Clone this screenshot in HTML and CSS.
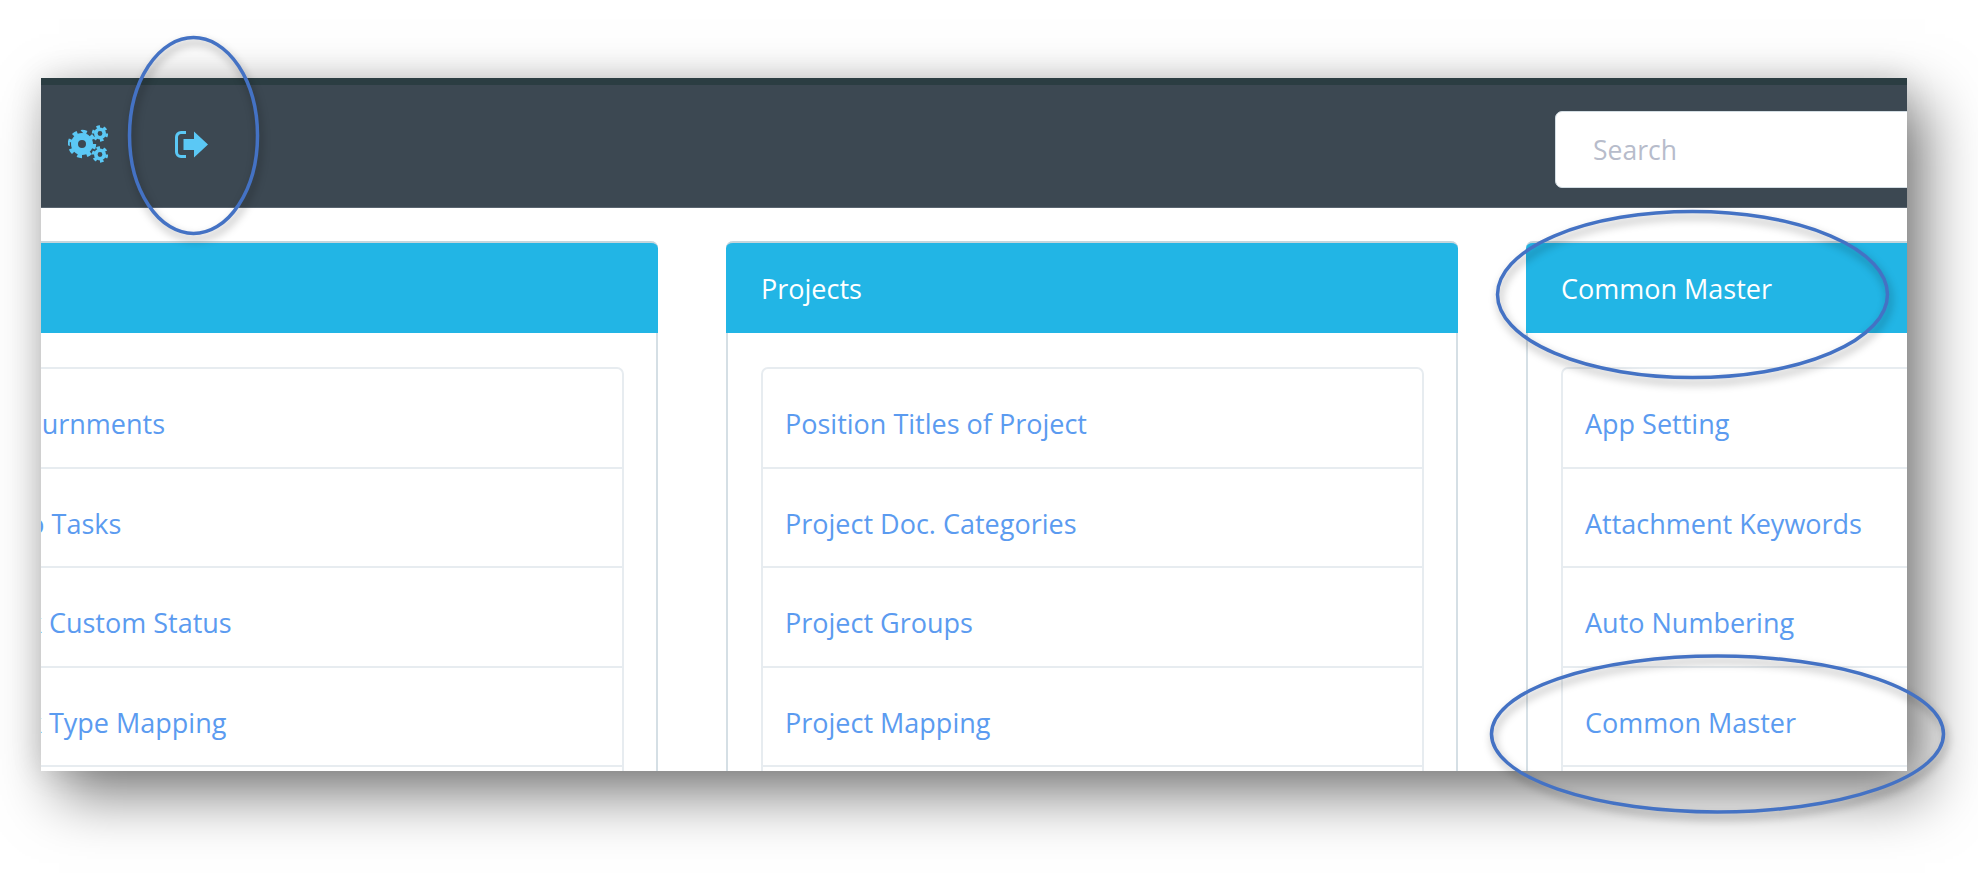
FILE: index.html
```html
<!DOCTYPE html>
<html lang="en">
<head>
<meta charset="utf-8">
<title>Settings</title>
<link rel="stylesheet" href="styles.css">
</head>
<body>
<div class="stage">
  <div class="window">
    <header class="topbar">
      <svg class="icon-cogs" viewBox="0 0 40 38" width="40" height="38" aria-hidden="true">
        <circle class="gear-ring" cx="14" cy="19" r="7.500" stroke-width="7"/>
        <circle class="gear-teeth" cx="14" cy="19" r="12.2" stroke-width="4" pathLength="80" stroke-dasharray="5 5"/>
        <circle class="gear-ring" cx="32" cy="8.500" r="4.200" stroke-width="3.600"/>
        <circle class="gear-teeth" cx="32" cy="8.500" r="6.800" stroke-width="2.800" pathLength="48" stroke-dasharray="4 4"/>
        <circle class="gear-ring" cx="32" cy="29.500" r="4.200" stroke-width="3.600"/>
        <circle class="gear-teeth" cx="32" cy="29.500" r="6.800" stroke-width="2.800" pathLength="48" stroke-dasharray="4 4"/>
      </svg>
      <svg class="icon-signout" viewBox="0 0 33 27" width="33" height="27" aria-hidden="true">
        <path class="door" d="M11 1.500H6A4.500 4.500 0 0 0 1.500 6v15A4.500 4.500 0 0 0 6 25.500h5"/>
        <path class="arrow" d="M19 0.500 33 13.500 19 26.500V19H8.500V8H19z"/>
      </svg>
      <div class="search"><span class="search-text">Search</span></div>
    </header>
    <main class="panels">
      <section class="panel">
        <h2 class="panel-head">Tasks</h2>
        <div class="panel-body">
          <ul class="list">
            <li class="row"><a class="link">Adjournments</a></li>
            <li class="row"><a class="link">Auto Tasks</a></li>
            <li class="row"><a class="link">Task Custom Status</a></li>
            <li class="row"><a class="link">Task Type Mapping</a></li>
            <li class="row"><a class="link">Priorities</a></li>
          </ul>
        </div>
      </section>
      <section class="panel">
        <h2 class="panel-head">Projects</h2>
        <div class="panel-body">
          <ul class="list">
            <li class="row"><a class="link">Position Titles of Project</a></li>
            <li class="row"><a class="link">Project Doc. Categories</a></li>
            <li class="row"><a class="link">Project Groups</a></li>
            <li class="row"><a class="link">Project Mapping</a></li>
            <li class="row"><a class="link">Project Types</a></li>
          </ul>
        </div>
      </section>
      <section class="panel">
        <h2 class="panel-head">Common Master</h2>
        <div class="panel-body">
          <ul class="list">
            <li class="row"><a class="link">App Setting</a></li>
            <li class="row"><a class="link">Attachment Keywords</a></li>
            <li class="row"><a class="link">Auto Numbering</a></li>
            <li class="row"><a class="link">Common Master</a></li>
            <li class="row"><a class="link">Countries</a></li>
          </ul>
        </div>
      </section>
    </main>
  </div>
  <svg class="callout callout-a" viewBox="0 0 137 205" aria-hidden="true"><ellipse cx="68.500" cy="102.500" rx="64" ry="98"/></svg>
  <svg class="callout callout-b" viewBox="0 0 399 175" aria-hidden="true"><ellipse cx="199.500" cy="87.500" rx="195" ry="83"/></svg>
  <svg class="callout callout-c" viewBox="0 0 461 164" aria-hidden="true"><ellipse cx="230.500" cy="82" rx="226" ry="78"/></svg>
</div>
</body>
</html>
```

FILE: styles.css
```css
* { box-sizing: border-box; }
html, body { margin: 0; padding: 0; background: #fff; }
body { font-family: "Open Sans", "Noto Sans", sans-serif; overflow: hidden; }

.stage { position: relative; width: 1978px; height: 873px; padding: 78px 0 0 41px; }

.window {
  width: 1866px;
  height: 693px;
  overflow: hidden;
  background: #fff;
  box-shadow: 18px 24px 56px rgba(0, 0, 0, .5), 0 0 30px rgba(0, 0, 0, .12);
}

.topbar {
  display: flex;
  align-items: center;
  height: 130px;
  padding: 0 0 0 27px;
  background: #3c4852;
  border-top: 7px solid #2b3d42;
  border-bottom: 1px solid #5a6570;
}
.icon-cogs { fill: none; margin-bottom: 4px; }
.gear-ring, .gear-teeth { fill: none; stroke: #5bc8f5; }
.icon-signout { margin: 0 0 4px 67px; }
.door { fill: none; stroke: #5bc8f5; stroke-width: 3; }
.arrow { fill: #5bc8f5; }

.search {
  display: flex;
  align-items: center;
  flex: none;
  width: 500px;
  height: 77px;
  margin: 7px -148px 0 auto;
  padding-left: 37px;
  background: #fff;
  border-radius: 7px;
  border: 1px solid #d3dde3;
}
.search-text { font-size: 26.500px; color: #b7bccb; }

.panels { display: flex; gap: 68px; margin: 33px 0 0 -115px; }

.panel {
  flex: none;
  width: 732px;
  background: #fff;
  border: 2px solid #d5dfe5;
  border-top-width: 0;
  border-radius: 7px 7px 0 0;
}
.panel-head {
  height: 92px;
  margin: 0 -2px;
  padding: 0 0 0 35px;
  display: flex;
  align-items: center;
  font-size: 27px;
  font-weight: 400;
  color: #fff;
  background: #22b5e5;
  border-top: 2px solid #c5d5dc;
  border-radius: 7px 7px 0 0;
}
.panel-body { padding: 34px 32px 0 33px; }

.list { list-style: none; margin: 0; padding: 0; border: 2px solid #e7ecf0; border-radius: 7px 7px 0 0; }
.row { height: 99.6px; padding: 36px 0 0 22px; border-bottom: 2px solid #e7ecf0; }
.link { font-size: 27px; color: #5b9bf0; }

.callout { position: absolute; overflow: visible; filter: drop-shadow(2px 5px 4px rgba(0, 0, 0, .35)); }
.callout ellipse { fill: none; stroke: #4472c4; stroke-width: 3.500; }
.callout-a { left: 125px; top: 33px; width: 137px; height: 205px; }
.callout-b { left: 1493px; top: 207px; width: 399px; height: 175px; }
.callout-c { left: 1487px; top: 652px; width: 461px; height: 164px; }
```
